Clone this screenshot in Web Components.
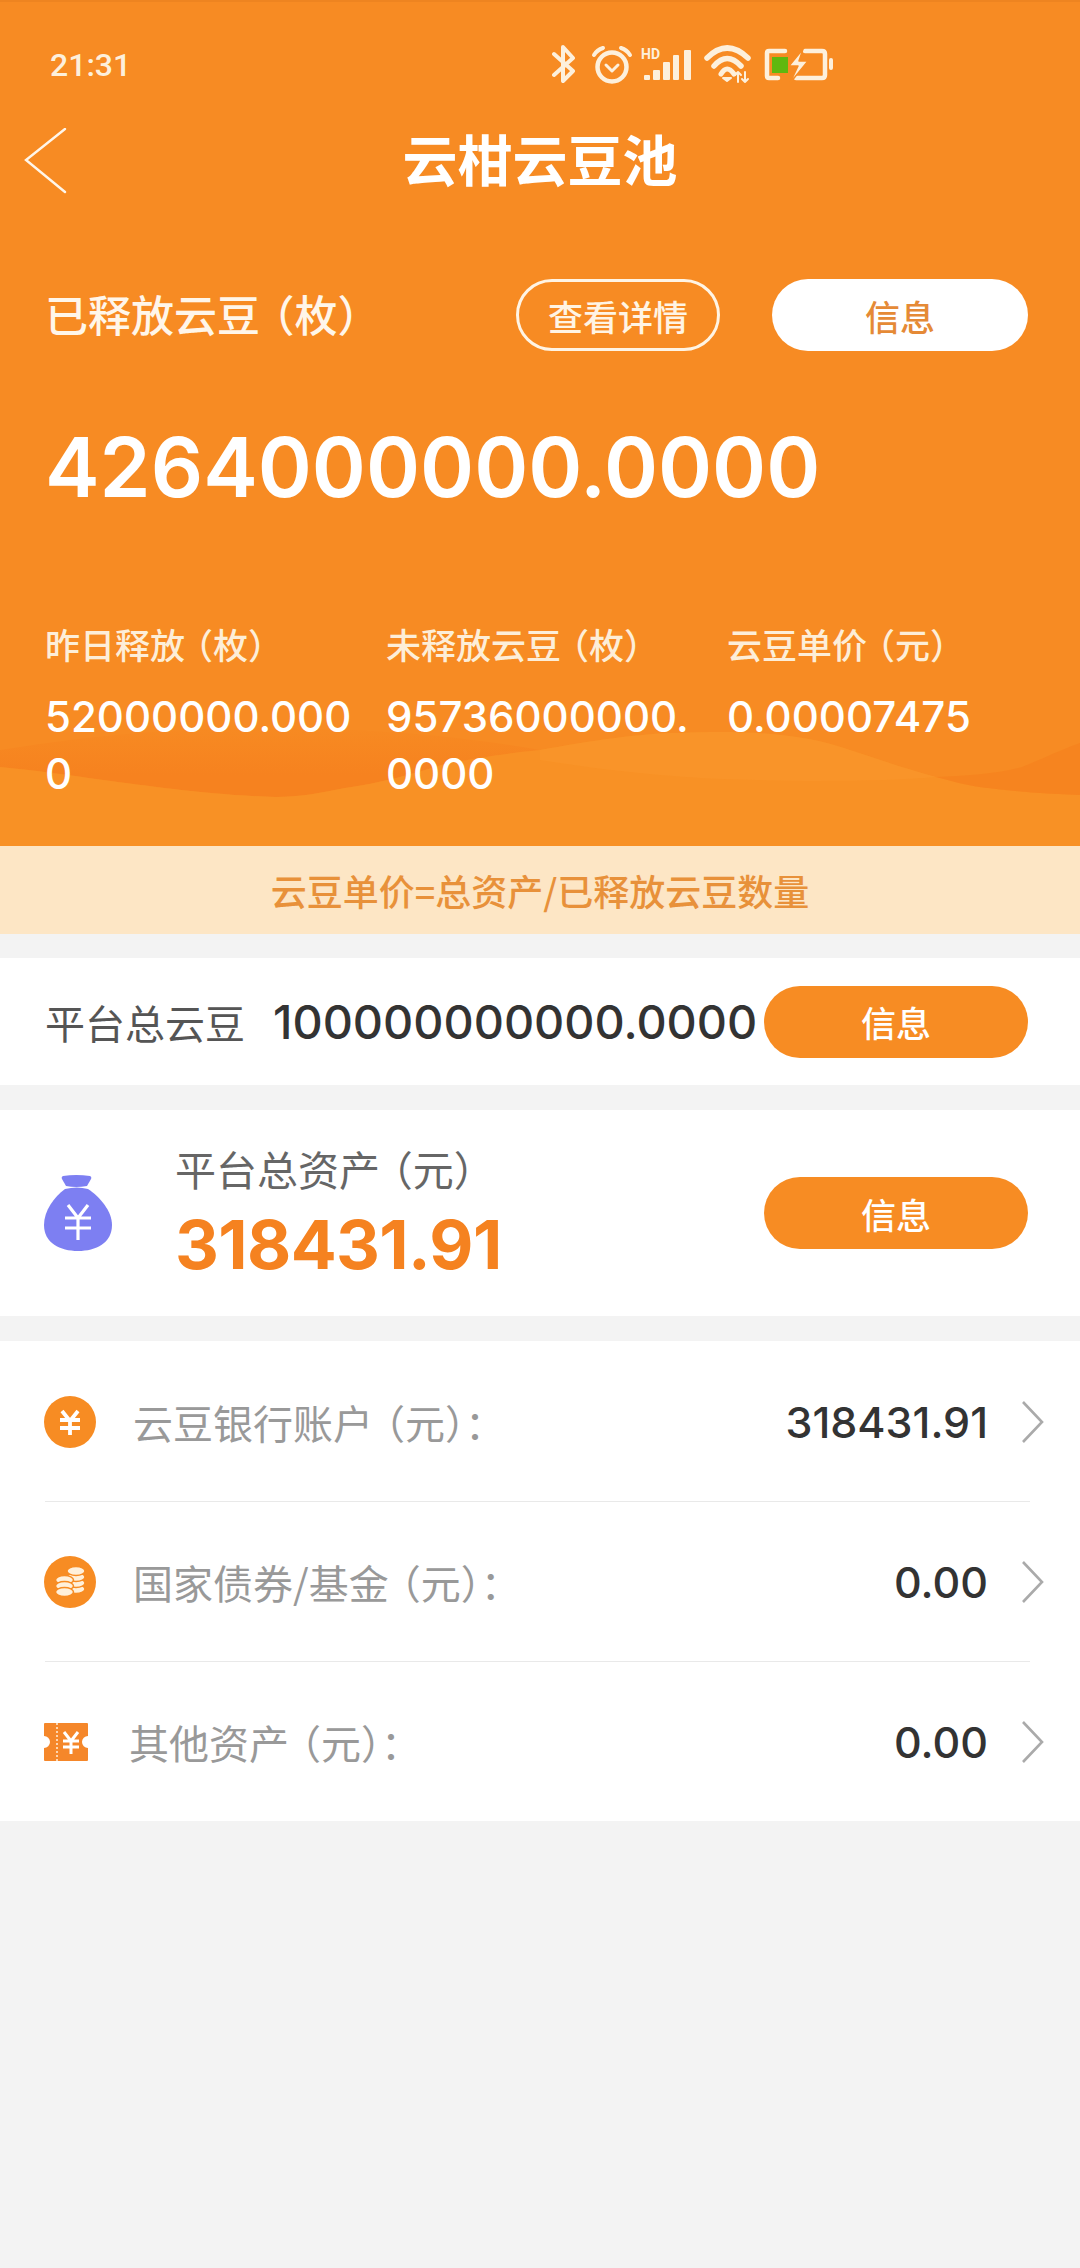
<!DOCTYPE html>
<html lang="zh-CN">
<head>
<meta charset="utf-8">
<title>云柑云豆池</title>
<style>
  html, body { margin: 0; padding: 0; }
  body {
    width: 1080px; min-height: 2268px; background: #f3f3f3;
    font-family: "Noto Sans CJK SC", "Noto Sans", sans-serif;
    display: flex; flex-direction: column;
  }
</style>
</head>
<body>
<pool-hero>
  <stat-col label="昨日释放" unit="枚" value="52000000.0000"></stat-col>
  <stat-col label="未释放云豆" unit="枚" value="95736000000.0000"></stat-col>
  <stat-col label="云豆单价" unit="元" value="0.00007475"></stat-col>
</pool-hero>
<formula-note>云豆单价=总资产/已释放云豆数量</formula-note>
<total-row></total-row>
<assets-card></assets-card>
<asset-list>
  <asset-row icon="yen" label="云豆银行账户" value="318431.91"></asset-row>
  <asset-row icon="coins" label="国家债券/基金" value="0.00"></asset-row>
  <asset-row icon="ticket" label="其他资产" value="0.00" last></asset-row>
</asset-list>

<script>
  const define = (name, css, html) => {
    customElements.define(name, class extends HTMLElement {
      constructor() {
        super();
        const root = this.attachShadow({ mode: 'open' });
        root.innerHTML = `<style>${css}</style>` + (typeof html === 'function' ? html(this) : html);
      }
    });
  };

  // Parenthesised units sit tighter than a full-width bracket would.
  const unit = u => `<span class="u"><i>（</i>${u}<i>）</i></span>`;
  const unitCss = `.u{margin-left:.3em}.u i{font-style:normal;font-feature-settings:"halt";}`;
  const digits = `Inter, "Noto Sans", sans-serif`;

  define('pill-button', `
    :host{display:inline-flex;align-items:center;justify-content:center;height:72px;border-radius:36px;
      box-sizing:border-box;font-size:35px;font-weight:500;line-height:1;flex:none}
    :host([kind=solid]){width:264px;background:#f78c23;color:#fff}
    :host([kind=white]){width:256px;background:#fff;color:#e58a36}
    :host([kind=outline]){width:204px;border:3.5px solid #fff4e4;color:#fff4e4}
  `, `<slot></slot>`);

  define('status-bar', `
    :host{display:flex;align-items:center;height:50px;margin-top:38px;padding-left:50px;color:#fdf0dc}
    .t{font:500 32px/50px Roboto, sans-serif;width:502px}
    svg{display:block}
    text{font:700 14px Roboto, sans-serif;fill:#fdf0dc}
  `, `<span class="t">21:31</span>
    <svg width="290" height="50" viewBox="552 40 290 50" fill="none" stroke="#fdf0dc" stroke-linecap="round" stroke-linejoin="round">
      <!-- bluetooth -->
      <path d="M554 54 L573 71 L563 81 V47 L573 58 L554 75" stroke-width="4"/>
      <!-- alarm clock -->
      <circle cx="612" cy="67" r="14.5" stroke-width="4.5"/>
      <path d="M606 65 L612 71 L618 65" stroke-width="3"/>
      <path d="M594 55 Q597 50 603 48 M630 55 Q627 50 621 48" stroke-width="4"/>
      <!-- HD signal -->
      <text x="641" y="59" stroke="none">HD</text>
      <rect x="644" y="75" width="6" height="5" rx="1" fill="#fdf0dc" stroke="none"/>
      <rect x="653" y="70" width="7" height="10" rx="1" fill="#fdf0dc" stroke="none"/>
      <rect x="663" y="62" width="7" height="18" rx="1" fill="#fdf0dc" stroke="none"/>
      <rect x="673" y="55" width="6" height="25" rx="1" fill="#fdf0dc" stroke="none"/>
      <rect x="684" y="50" width="7" height="30" rx="1" fill="#fdf0dc" stroke="none"/>
      <!-- wifi -->
      <path d="M707 58 Q727 38 748 58" stroke-width="5.5"/>
      <path d="M714 66 Q727 51 741 66" stroke-width="5.5"/>
      <path d="M721 74 Q727 64 734 74" stroke-width="5"/>
      <path d="M727 81 L723 78 H731 Z" fill="#fdf0dc" stroke-width="2"/>
      <path d="M738 72 V82 M745 72 V82 M735 75 L738 72 L741 75 M742 79 L745 82 L748 79" stroke-width="2"/>
      <!-- battery -->
      <path d="M785 51 H769 Q767 51 767 53 V76 Q767 78 769 78 H778 M805 51 H822 Q825 51 825 54 V75 Q825 78 822 78 H796" stroke-width="4.5"/>
      <rect x="772" y="57" width="16" height="16" fill="#5fb80f" stroke="none"/>
      <rect x="829" y="58" width="4" height="12" rx="2" fill="#fdf0dc" stroke="none"/>
      <path d="M803 49 L789 66 H798 L790 83 L808 61 H799 Z" fill="#fdf0dc" stroke="#f78c23" stroke-width="1.5"/>
    </svg>`);

  define('nav-bar', `
    :host{display:flex;align-items:center;justify-content:center;position:relative;height:140px}
    svg{position:absolute;left:24px;top:38px}
    h1{margin:0;font-size:55px;font-weight:700;color:#fff;line-height:1;position:relative;top:-3px}
  `, `<svg width="44" height="66" viewBox="0 0 44 66" fill="none" stroke="#fff6ea" stroke-width="2.4">
      <path d="M41 1 L2 32 L41 64" stroke-linecap="round"/></svg>
    <h1>云柑云豆池</h1>`);

  define('stat-col', `
    :host{display:block;width:341px;box-sizing:border-box;padding-right:22px}
    .l{font-size:35px;line-height:46px;color:#fdeed8;white-space:nowrap;font-weight:500}
    .v{margin-top:21px;font:500 42px/57px ${digits};color:#fff;word-break:break-all}
    ${unitCss}
  `, h => `<div class="l">${h.getAttribute('label')}${unit(h.getAttribute('unit'))}</div>
    <div class="v">${h.getAttribute('value')}</div>`);

  define('pool-hero', `
    :host{display:block;position:relative;background:#f78b23;height:846px;border-top:2px solid #ee8420;box-sizing:border-box;overflow:hidden}
    .wave{position:absolute;left:0;top:698px}
    .in{position:relative;display:flex;flex-direction:column}
    .head{display:flex;align-items:center;margin-top:49px;padding:0 52px 0 45px}
    .head span.a{font-size:43px;font-weight:500;color:#fff6ea;line-height:72px;width:471px;white-space:nowrap;position:relative;top:-2px}
    pill-button[kind=outline]{margin-right:52px}
    .big{margin:57px 0 0 45px;font:600 82px/120px ${digits};color:#fff;white-space:nowrap}
    .stats{display:flex;margin:93px 0 0 45px}
    ${unitCss}
  `, `<svg class="wave" width="1080" height="146" viewBox="0 700 1080 146">
      <defs>
        <linearGradient id="band" gradientUnits="userSpaceOnUse" x1="0" y1="728" x2="0" y2="775">
          <stop offset="0" stop-color="#f78a22"/><stop offset="1" stop-color="#f6821f"/>
        </linearGradient>
      </defs>
      <!-- soft hills behind the figures -->
      <path d="M0 750 C50 742 90 737 138 733 C280 722 430 730 540 750 C490 755 470 760 448 763 C410 775 380 783 345 788 C320 793 300 797 275 797 C210 795 150 786 103 780 C70 775 30 770 0 767 Z" fill="url(#band)"/>
      <path d="M0 767 C30 770 70 775 103 780 C150 786 210 795 275 797 C300 797 320 793 345 788 C380 783 410 775 448 763 C470 760 490 755 540 750 C590 741 640 733 678 733 C720 731 755 732 781 735 C810 738 830 743 850 750 C880 760 910 770 936 777 C955 782 970 786 988 788 C1020 792 1050 794 1080 795 V846 H0 Z" fill="#f89125"/>
      <path d="M540 750 C590 741 640 733 678 733 C720 731 755 732 781 735 C810 738 830 743 850 750 C880 760 910 770 936 777 C880 782 780 782 700 778 C640 774 590 768 540 760 Z" fill="#f99429"/>
      <path d="M1080 743 C1055 752 1040 760 1022 767 C995 774 965 776 936 777 C955 782 970 786 988 788 C1020 792 1050 794 1080 795 Z" fill="#f6841f"/>
    </svg>
    <div class="in">
      <status-bar></status-bar>
      <nav-bar></nav-bar>
      <div class="head"><span class="a">已释放云豆${unit('枚')}</span>
        <pill-button kind="outline">查看详情</pill-button><pill-button kind="white">信息</pill-button></div>
      <div class="big">4264000000.0000</div>
      <div class="stats"><slot></slot></div>
    </div>`);

  define('formula-note', `
    :host{display:flex;align-items:center;justify-content:center;height:88px;background:#fde6c5;color:#e8913a;font-size:36px;font-weight:500}
  `, `<slot></slot>`);

  define('total-row', `
    :host{display:flex;align-items:center;height:127px;margin-top:24px;background:#fff;padding:0 52px 0 45px}
    .l{font-size:40px;color:#555;width:228px;white-space:nowrap}
    .v{font:500 46.8px ${digits};color:#333;width:491px;white-space:nowrap}
  `, `<span class="l">平台总云豆</span><span class="v">100000000000.0000</span><pill-button kind="solid">信息</pill-button>`);

  define('assets-card', `
    :host{display:flex;align-items:center;height:206px;margin-top:25px;background:#fff;padding:0 52px 0 44px}
    svg{flex:none;margin-right:63px}
    .m{width:589px;align-self:flex-start;padding-top:33px}
    .l{font-size:41px;line-height:50px;color:#666;white-space:nowrap}
    .v{margin-top:7px;font:700 68px/88px ${digits};letter-spacing:-.6px;color:#f58220}
    ${unitCss}
  `, `<svg width="68" height="76" viewBox="0 0 68 76">
      <path d="M19 1 Q32 -1 46 1 Q48 2 47 4 L43 11 Q32 13 22 11 L18 4 Q17 2 19 1 Z" fill="#7d7ff2"/>
      <path d="M21 14 Q33 11 44 14 C56 22 68 36 68 50 C68 68 52 76 34 76 C16 76 0 68 0 50 C0 36 10 22 21 14 Z" fill="#7d7ff2"/>
      <path d="M24 30 L34 43 L44 30 M21 43 H47 M21 53 H47 M34 43 V65" fill="none" stroke="#fff" stroke-width="3.2"/>
    </svg>
    <div class="m"><div class="l">平台总资产${unit('元')}</div><div class="v">318431.91</div></div>
    <pill-button kind="solid">信息</pill-button>`);

  define('asset-list', `
    :host{display:block;margin-top:25px;padding-top:1px;background:#fff}
  `, `<slot></slot>`);

  const coinStack = (x, ys) => ys.map(y =>
    `<ellipse cx="${x}" cy="${y}" rx="9" ry="4.4"/>`).join('');
  const icons = {
    yen: `<svg width="52" height="52" viewBox="0 0 52 52"><circle cx="26" cy="26" r="26" fill="#f78c23"/>
      <path d="M18 15 L26 25 L34 15 M16 24 H36 M16 32 H36 M26 25 V39" fill="none" stroke="#fff" stroke-width="3.8"/></svg>`,
    coins: `<svg width="52" height="52" viewBox="0 0 52 52"><circle cx="26" cy="26" r="26" fill="#f78c23"/>
      <g fill="#fff0da" stroke="#f78c23" stroke-width="1.5">
      ${coinStack(32, [33, 27, 21, 15])}${coinStack(20.5, [24, 30, 36])}
      </g></svg>`,
    ticket: `<svg width="44" height="38" viewBox="0 0 44 38">
      <path d="M1 0 H43 Q44 0 44 1 V13 A6 6 0 0 0 44 25 V37 Q44 38 43 38 H1 Q0 38 0 37 V25 A6 6 0 0 0 0 13 V1 Q0 0 1 0 Z" fill="#f5872a"/>
      <path d="M13 0 V38" stroke="#ffe9d0" stroke-width="1.6" stroke-dasharray="2 2"/>
      <path d="M20 9 L27 18 L34 9 M19 18 H35 M19 24 H35 M27 18 V31" fill="none" stroke="#fff" stroke-width="3"/></svg>`
  };

  define('asset-row', `
    :host{display:block;padding:0 35px 0 44px;box-sizing:border-box}
    .r{display:flex;align-items:center;height:159px}
    .ic{display:flex;width:89px;flex:none}
    :host([icon=ticket]) .ic{width:85px}
    .l{flex:1;font-size:40px;color:#999;white-space:nowrap}
    .v{font:500 43px ${digits};color:#333;white-space:nowrap}
    svg.c{margin-left:33px;flex:none}
    hr{margin:0 15px 0 1px;border:0;height:1px;background:#e9e9e9}
    :host([last]) hr{display:none}
    ${unitCss}
  `, h => `<div class="r"><span class="ic">${icons[h.getAttribute('icon')]}</span>
      <span class="l">${h.getAttribute('label')}${unit('元')}：</span><span class="v">${h.getAttribute('value')}</span>
      <svg class="c" width="24" height="44" viewBox="0 0 24 44" fill="none" stroke="#aaa" stroke-width="2.6"><path d="M2 2 L21 22 L2 42"/></svg></div><hr>`);
</script>
</body>
</html>
